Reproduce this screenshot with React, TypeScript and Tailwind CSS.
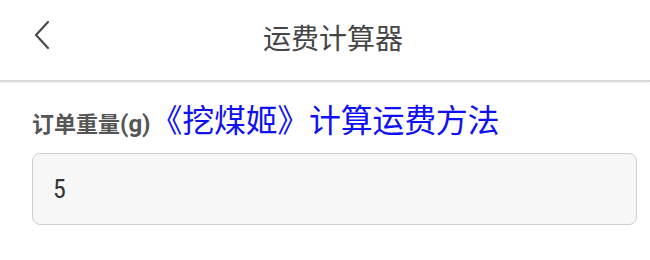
export default function App() {
  return (
    <div className="w-[650px] h-[260px] bg-white overflow-hidden" style={{ fontFamily: '"Noto Sans CJK SC", "Noto Sans", sans-serif' }}>
      <header className="h-[82px] grid grid-cols-[96px_1fr_80px] items-center border-b-2 border-[#d9d9d9] shadow-[0_1px_2px_rgba(0,0,0,0.08)]">
        <div className="pl-[33px] pb-[10px]">
          <svg width="18" height="30" viewBox="0 0 18 30" fill="none">
            <path d="M15 2 L3 15 L15 28" stroke="#4a4a4a" strokeWidth="2.2" strokeLinecap="round" strokeLinejoin="round" />
          </svg>
        </div>
        <h1 className="text-center text-[28px] leading-none text-[#454545] pb-[6px]">运费计算器</h1>
        <div />
      </header>

      <main className="pl-[32px] pr-[13px] pt-[20px]">
        <div className="flex items-baseline whitespace-nowrap">
          <span className="text-[22px] leading-none font-bold text-[#555]">
            订单重量<span style={{ fontFamily: "Roboto, sans-serif" }} className="text-[24px]">(g)</span>
          </span>
          <span className="text-[32px] leading-none text-[#1010f5] tracking-[-0.3px]">《挖煤姬》计算运费方法</span>
        </div>

        <div className="mt-[17px] h-[72px] rounded-[8px] border-[1.5px] border-[#cfcfcf] bg-[#f7f7f7] flex items-center px-[20px]">
          <span className="text-[26px] text-[#333]" style={{ fontFamily: '"Roboto Condensed", Roboto, sans-serif' }}>5</span>
        </div>
      </main>
    </div>
  );
}
